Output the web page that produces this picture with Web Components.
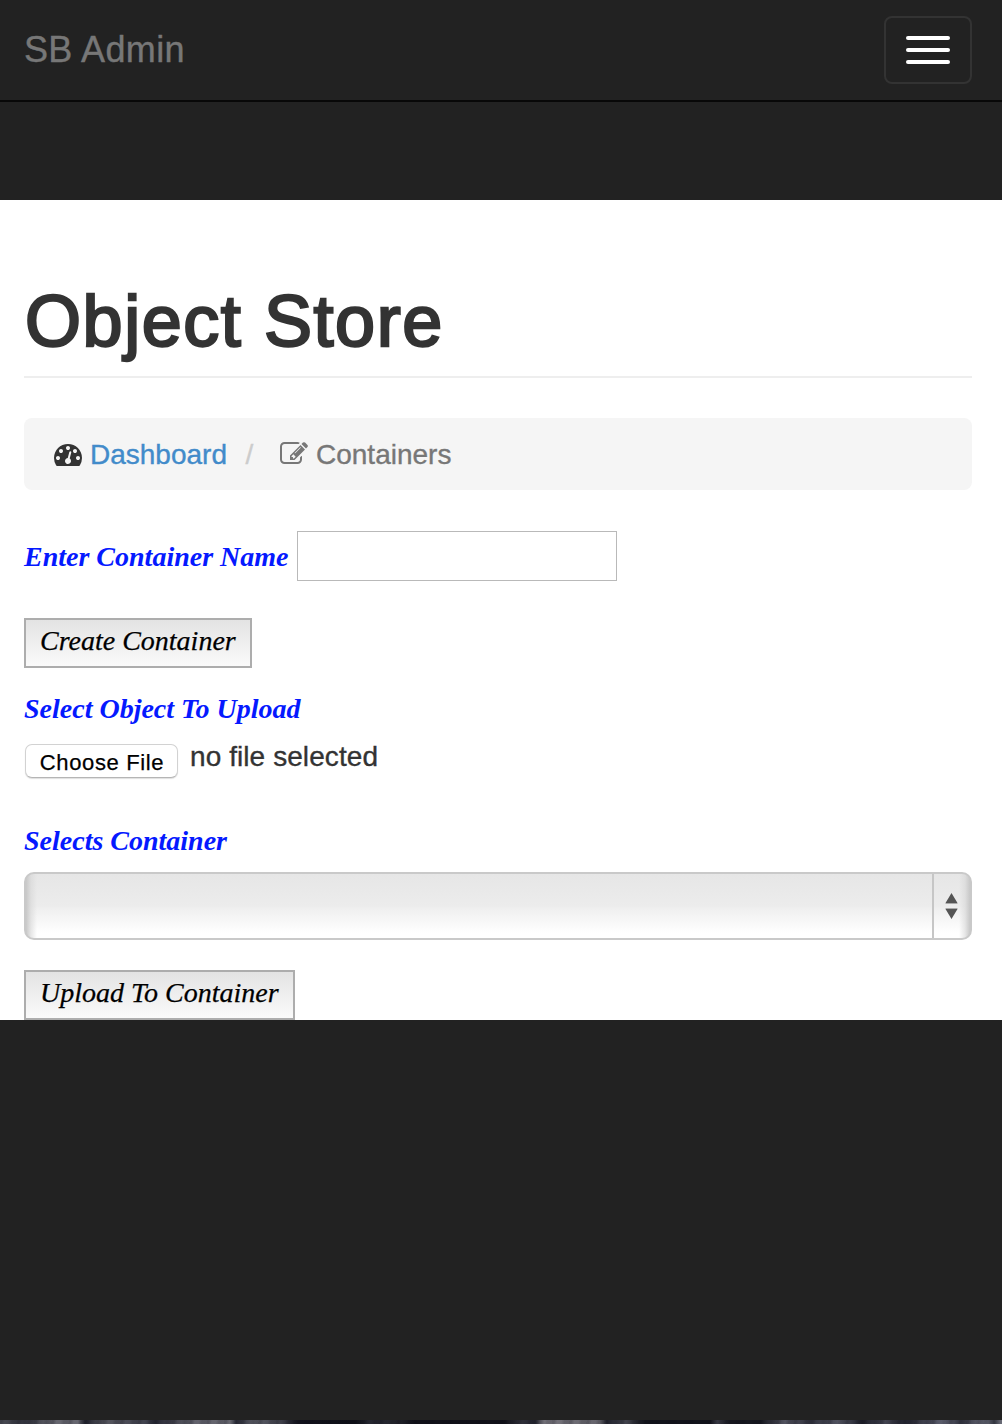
<!DOCTYPE html>
<html lang="en">
<head>
<meta charset="utf-8">
<title>SB Admin - Object Store</title>
<style>
html,body{margin:0;background:#222;}
body{font-family:"Liberation Sans",Arial,sans-serif;color:#333;width:1002px;height:1424px;overflow:hidden}
</style>
</head>
<body>
<sb-app></sb-app>
<script>
function define(name, html) {
  const t = document.createElement('template');
  t.innerHTML = html;
  customElements.define(name, class extends HTMLElement {
    constructor() {
      super();
      this.attachShadow({mode: 'open'}).append(t.content.cloneNode(true));
    }
  });
}

define('sb-navbar', `<style>
:host{display:flex;box-sizing:border-box;height:102px;border-bottom:2px solid #080808;background:#222;padding:0 30px 0 24px;justify-content:space-between;align-items:center}
.brand{font-size:36px;line-height:100px;color:#777;letter-spacing:.35px;-webkit-text-stroke:.4px #777}
button{box-sizing:border-box;width:88px;height:68px;border:2px solid #333;border-radius:8px;background:none;padding:0;display:flex;flex-direction:column;gap:8px;align-items:center;justify-content:center}
i{width:44px;height:4px;border-radius:2px;background:#fff}
</style><span class="brand"><slot></slot></span><button aria-label="Menu"><i></i><i></i><i></i></button>`);

define('page-header', `<style>
:host{display:block;box-sizing:border-box;height:97px;border-bottom:2px solid #eee;font-size:72px;line-height:80px;letter-spacing:1.55px;-webkit-text-stroke:2.4px #333;white-space:nowrap}
</style><slot></slot>`);

define('icon-dashboard', `<style>:host{display:block;width:28px;height:28px;color:#333}svg{display:block}</style>
<svg width="28" height="28" viewBox="0 0 1792 1792" fill="currentColor"><path d="M384 1152q0-53-37.5-90.5t-90.5-37.5-90.5 37.5-37.5 90.5 37.5 90.5 90.5 37.5 90.5-37.5 37.5-90.5zm192-448q0-53-37.5-90.5t-90.5-37.5-90.5 37.5-37.5 90.5 37.5 90.5 90.5 37.5 90.5-37.5 37.5-90.5zm428 481l101-382q6-26-7.5-48.5t-38.5-29.5-48 6.5-30 39.5l-101 382q-60 5-107 43.5t-63 98.5q-20 77 20 146t117 89 146-20 89-117q16-60-6-117t-72-91zm660-33q0-53-37.5-90.5t-90.5-37.5-90.5 37.5-37.5 90.5 37.5 90.5 90.5 37.5 90.5-37.5 37.5-90.5zm-640-640q0-53-37.5-90.5t-90.5-37.5-90.5 37.5-37.5 90.5 37.5 90.5 90.5 37.5 90.5-37.5 37.5-90.5zm448 192q0-53-37.5-90.5t-90.5-37.5-90.5 37.5-37.5 90.5 37.5 90.5 90.5 37.5 90.5-37.5 37.5-90.5zm320 448q0 261-141 483-19 29-54 29h-1402q-35 0-54-29-141-221-141-483 0-182 71-348t191-286 286-191 348-71 348 71 286 191 191 286 71 348z"/></svg>`);

define('icon-edit', `<style>:host{display:block;width:28px;height:28px}svg{display:block}</style>
<svg width="28" height="28" viewBox="0 0 1792 1792" fill="currentColor"><path d="M888 1184l116-116-152-152-116 116v56h96v96h56zm440-720q-16-16-33 1l-350 350q-17 17-1 33t33-1l350-350q17-17 1-33zm80 594v190q0 119-84.5 203.5t-203.5 84.5h-832q-119 0-203.5-84.5t-84.5-203.5v-832q0-119 84.5-203.5t203.5-84.5h832q63 0 117 25 15 7 18 23 3 17-9 29l-49 49q-14 14-32 8-23-6-45-6h-832q-66 0-113 47t-47 113v832q0 66 47 113t113 47h832q66 0 113-47t47-113v-126q0-13 9-22l64-64q15-15 35-7t20 29zm-96-738l288 288-672 672h-288v-288zm444 132l-92 92-288-288 92-92q28-28 68-28t68 28l152 152q28 28 28 68t-28 68z"/></svg>`);

define('bread-crumb', `<style>
:host{display:flex;box-sizing:border-box;height:72px;align-items:center;background:#f5f5f5;border-radius:8px;padding-left:30px;font-size:28px;line-height:72px;color:#777}
a,span{padding-top:1px;-webkit-text-stroke:.35px currentColor}
a{color:#428bca;margin-left:8px;width:137px}
.sep{color:#ccc;width:53px;text-align:center;box-sizing:border-box;padding-right:8px}
.here{margin-left:8px}
</style><icon-dashboard></icon-dashboard><a>Dashboard</a><span class="sep">/</span><icon-edit></icon-edit><span class="here">Containers</span>`);

define('form-label', `<style>
:host{display:block;font:italic bold 28px/42px "Liberation Serif","Times New Roman",serif;height:40px;color:#0519ff;white-space:nowrap}
</style><slot></slot>`);

define('text-field', `<style>
:host{display:block}input{display:block;box-sizing:border-box;width:320px;height:50px;border:1px solid #b9b9b9;background:#fff;padding:0 8px;margin:0;outline:0;font-size:28px}
</style><input type="text" aria-label="Container name">`);

define('plain-button', `<style>
:host{display:block;box-sizing:border-box;width:max-content;height:50px;border:2px solid #adadad;background:linear-gradient(#e3e3e3,#fafafa);padding:0 14px;font:italic 28px/41px "Liberation Serif","Times New Roman",serif;color:#000;white-space:nowrap;-webkit-text-stroke:.25px #000}
</style><slot></slot>`);

define('file-picker', `<style>
:host{display:flex;height:36px;padding-left:1px;white-space:nowrap}
.b{box-sizing:border-box;width:153px;height:34px;border:1px solid #d2d2d2;border-bottom-color:#b5b5b5;border-radius:7px;background:#fff;box-shadow:0 1px 1px rgba(0,0,0,.13);padding-left:1px;text-align:center;font-size:22px;line-height:35px;letter-spacing:.65px;color:#000;-webkit-text-stroke:.25px #000}
.n{margin-left:12px;font-size:28px;line-height:26px;letter-spacing:.08px;-webkit-text-stroke:.35px #333}
</style><span class="b">Choose File</span><span class="n">no file selected</span>`);

define('select-box', `<style>
:host{display:flex;box-sizing:border-box;height:68px;border:2px solid #c9c9c9;border-radius:10px;justify-content:flex-end;overflow:hidden;
background:linear-gradient(90deg,#c8c8c8,rgba(215,215,215,.6) 5px,rgba(235,235,235,0) 11px,rgba(235,235,235,0) calc(100% - 11px),rgba(215,215,215,.6) calc(100% - 5px),#c8c8c8),linear-gradient(#e6e6e6,#ececec 50%,#efefef 54%,#fff 92%)}
.s{display:flex;align-items:center;justify-content:center;box-sizing:border-box;width:38px;border-left:2px solid #c6c6c6}
svg{display:block}
</style><span class="s"><svg width="14" height="28" viewBox="0 0 14 28"><path d="M6.5 1L12.5 11H.5zM6.5 27L.5 17h12z" fill="#555"/><path d="M.5 11.5h12M.5 16.5h12" stroke="#aaa" stroke-width="1"/></svg></span>`);

define('photo-strip', `<style>
:host{display:block;height:4px;background:
repeating-linear-gradient(100deg,rgba(10,10,20,.2) 0 2px,transparent 5px 9px,rgba(10,10,20,.15) 12px 17px),
linear-gradient(90deg,#4b4c55 0,#30313b 25px,#66666f 55px,#66666f 78px,#21222d 85px,#55565f 105px,#41424e 145px,#262733 155px,#62626c 195px,#66666f 230px,#292b37 236px,#5a5b65 255px,#41424d 280px,#11111b 298px,#0d0e16 355px,#252630 370px,#24252d 395px,#101018 415px,#101018 505px,#30303a 520px,#242530 535px,#77757d 545px,#64636b 600px,#1f202b 607px,#43444e 625px,#11121a 645px,#11121a 710px,#393a45 718px,#15161e 730px,#15161e 760px,#51525f 785px,#30313d 810px,#525461 840px,#1c1d28 862px,#424350 885px,#20212c 905px,#606272 945px,#31323e 960px,#646674 985px,#343641 994px,#858793 1002px)}
</style>`);

define('sb-app', `<style>
:host{display:flex;flex-direction:column;height:1424px}
.gap{height:98px;background:#222}
main{box-sizing:border-box;height:820px;background:#fff;padding:81px 30px 0 24px;display:flex;flex-direction:column}
page-header{text-indent:1px}
bread-crumb{margin-top:40px}
.row{display:flex;align-items:center;margin-top:41px;height:50px}
.row form-label{width:273px}
.create{margin-top:37px}
.upload-label{margin-top:20px}
file-picker{margin-top:16px}
.select-label{margin-top:40px}
select-box{margin-top:12px}
.upload{margin-top:30px}
.foot{flex:1}
</style>
<sb-navbar>SB Admin</sb-navbar><div class="gap"></div>
<main>
<page-header>Object Store</page-header>
<bread-crumb></bread-crumb>
<div class="row"><form-label>Enter Container Name</form-label><text-field></text-field></div>
<plain-button class="create">Create Container</plain-button>
<form-label class="upload-label">Select Object To Upload</form-label>
<file-picker></file-picker>
<form-label class="select-label">Selects Container</form-label>
<select-box></select-box>
<plain-button class="upload">Upload To Container</plain-button>
</main>
<div class="foot"></div>
<photo-strip></photo-strip>`);
</script>
</body>
</html>
